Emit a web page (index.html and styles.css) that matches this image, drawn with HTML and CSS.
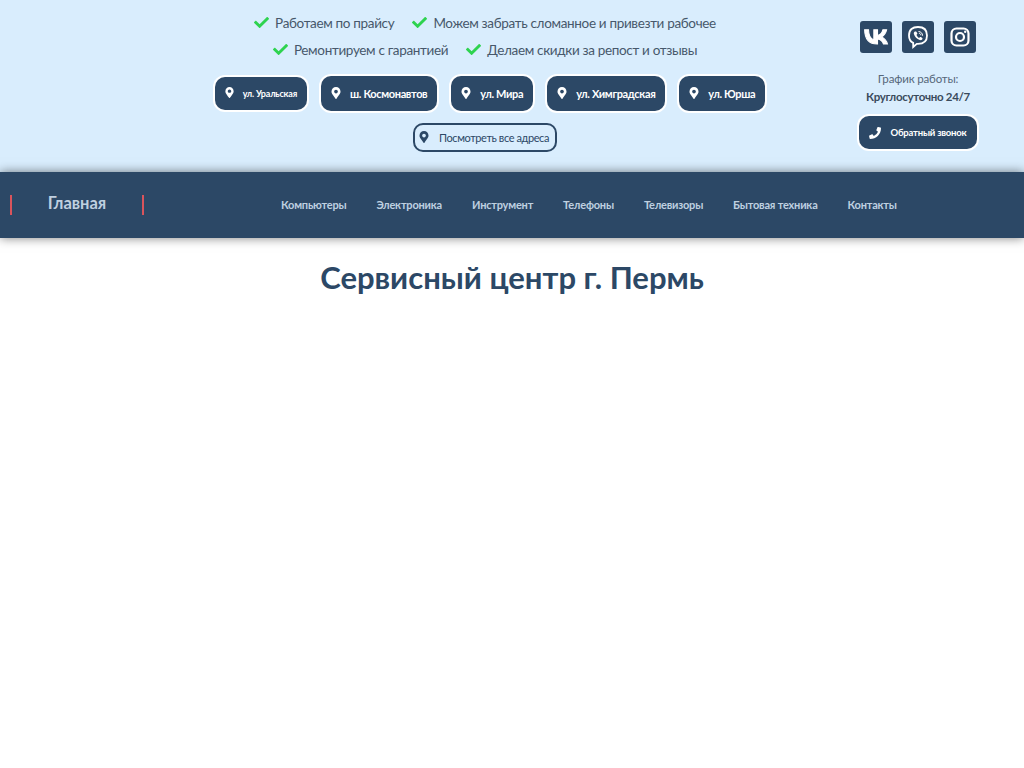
FILE: index.html
```html
<!DOCTYPE html>
<html lang="ru">
<head>
    <meta charset="UTF-8">
    <meta name="viewport" content="width=device-width, initial-scale=1.0">
    <title>Сервисный центр г. Пермь</title>
    <link rel="stylesheet" href="styles.css">
</head>
<body>
    <svg class="icon-defs" width="0" height="0">
        <symbol id="pin" viewBox="0 0 384 512">
            <path d="M172 502C27 291 0 269 0 192 0 86 86 0 192 0s192 86 192 192c0 77-27 99-172 310-10 14-30 14-40 0zm20-230c44 0 80-36 80-80s-36-80-80-80-80 36-80 80 36 80 80 80z"/>
        </symbol>
        <symbol id="check" viewBox="0 0 512 512">
            <path d="M174 439L7 273c-10-10-10-26 0-36l36-36c10-10 26-10 36 0l113 112L433 73c10-10 26-10 36 0l36 36c10 10 10 26 0 36L210 439c-10 10-26 10-36 0z"/>
        </symbol>
    </svg>

    <header class="top">
        <div class="top-main">
            <ul class="perks">
                <li><svg class="check"><use href="#check"/></svg>Работаем по прайсу</li>
                <li><svg class="check"><use href="#check"/></svg>Можем забрать сломанное и привезти рабочее</li>
            </ul>
            <ul class="perks">
                <li><svg class="check"><use href="#check"/></svg>Ремонтируем с гарантией</li>
                <li><svg class="check"><use href="#check"/></svg>Делаем скидки за репост и отзывы</li>
            </ul>
            <div class="addresses">
                <a class="addr addr-small" href="#"><svg class="pin"><use href="#pin"/></svg>ул. Уральская</a>
                <a class="addr" href="#"><svg class="pin"><use href="#pin"/></svg>ш. Космонавтов</a>
                <a class="addr" href="#"><svg class="pin"><use href="#pin"/></svg>ул. Мира</a>
                <a class="addr" href="#"><svg class="pin"><use href="#pin"/></svg>ул. Химградская</a>
                <a class="addr" href="#"><svg class="pin"><use href="#pin"/></svg>ул. Юрша</a>
            </div>
            <a class="all-addr" href="#"><svg class="pin"><use href="#pin"/></svg>Посмотреть все адреса</a>
        </div>
        <div class="top-side">
            <div class="socials">
                <a class="social" href="#">
                    <svg viewBox="0 0 24 24" width="26" height="26"><path fill="#fff" d="M13 18.500C5.800 18.500 1.700 13.600 1.500 5.300h3.600c.1 6.100 2.800 8.700 4.900 9.200V5.300h3.400v5.300c2.100-.2 4.300-2.600 5-5.300h3.400c-.6 3.300-3 5.700-4.700 6.700 1.700.8 4.500 2.900 5.500 6.500h-3.700c-.8-2.500-2.800-4.400-5.500-4.700v4.700z" stroke="#fff" stroke-width="1"/></svg>
                </a>
                <a class="social" href="#">
                    <svg viewBox="0 0 24 24" width="24" height="24" fill="none" stroke="#fff">
                        <path stroke-width="1.800" d="M12 2C6.500 2 3 4.500 3 10.500c0 3.700 1.400 6.100 4.200 7.400V22l3.600-3.200c.4 0 .8.100 1.200.100 6 0 9-3.200 9-8.400C21 4.500 17.500 2 12 2z"/>
                        <path fill="#fff" stroke="none" d="M9.200 6.500c.5-.2 1-.1 1.300.4l.7 1.100c.3.500.2 1-.2 1.300l-.5.400c.3 1.300 1.300 2.600 2.700 3.200l.5-.6c.3-.4.900-.5 1.300-.2l1.100.8c.5.300.5.900.2 1.300-.6.900-1.500 1.300-2.500.9-3-1.200-5-3.300-5.900-6.100-.3-1 .1-2 1-2.500z"/>
                        <path stroke-width="1" d="M12.500 6.500c2.500.2 4 1.800 4.100 4.200M12.900 8.300c1.200.1 1.900.9 2 2"/>
                    </svg>
                </a>
                <a class="social" href="#">
                    <svg viewBox="0 0 24 24" width="24" height="24" fill="none" stroke="#fff" stroke-width="2.200">
                        <rect x="3.500" y="3.500" width="17" height="17" rx="5"/>
                        <circle cx="12" cy="12" r="4"/>
                        <circle cx="17.200" cy="6.800" r="1.200" fill="#fff" stroke="none"/>
                    </svg>
                </a>
            </div>
            <p class="hours-label">График работы:</p>
            <p class="hours">Круглосуточно 24/7</p>
            <a class="callback" href="#">
                <svg viewBox="0 0 512 512" width="12" height="12"><path fill="#fff" d="M493 24L389 0c-11-3-23 3-27 14l-48 112c-4 10-1 21 7 28l61 50c-36 76-98 139-176 176l-50-61c-7-8-18-11-28-7L16 360c-11 5-17 17-14 28l24 104c3 11 12 20 24 20 256 0 462-207 462-462 0-12-8-22-19-26z"/></svg>
                Обратный звонок
            </a>
        </div>
    </header>

    <nav class="nav">
        <a class="nav-home" href="#">Главная</a>
        <ul class="nav-list">
            <li><a href="#">Компьютеры</a></li>
            <li><a href="#">Электроника</a></li>
            <li><a href="#">Инструмент</a></li>
            <li><a href="#">Телефоны</a></li>
            <li><a href="#">Телевизоры</a></li>
            <li><a href="#">Бытовая техника</a></li>
            <li><a href="#">Контакты</a></li>
        </ul>
    </nav>

    <h1 class="title">Сервисный центр г. Пермь</h1>
</body>
</html>
```

FILE: styles.css
```css
body {
    margin: 0;
    background: #fff;
    color: #2c4866;
    font-family: Lato, "Noto Sans", sans-serif;
}
a {
    text-decoration: none;
}
ul {
    list-style: none;
    margin: 0;
    padding: 0;
}
p {
    margin: 0;
}
.icon-defs {
    position: absolute;
}

/* верхний блок */
.top {
    display: flex;
    height: 172px;
    box-sizing: border-box;
    padding: 0 41px 0 117px;
    background: #d9edfd;
}
.top-main {
    flex: 1;
    display: flex;
    flex-direction: column;
    align-items: center;
    padding-top: 10px;
}
.perks {
    display: flex;
    justify-content: center;
    gap: 18px;
    height: 27px;
    line-height: 27px;
    font-size: 13.500px;
    letter-spacing: -0.33px;
    color: #47586b;
}
.perks li {
    display: flex;
    align-items: center;
}
.check {
    width: 15px;
    height: 15px;
    margin: -3px 6px 0 0;
    fill: #2ed34f;
}
.addresses {
    display: flex;
    justify-content: center;
    align-items: center;
    gap: 14px;
    margin: 12px 0 0 10px;
}
.addr {
    display: flex;
    align-items: center;
    height: 35px;
    padding: 0 10px;
    border-radius: 10px;
    background: #2c4866;
    box-shadow: 0 0 0 2px #fff;
    color: #fff;
    font-size: 11px;
    font-weight: 700;
    letter-spacing: -0.35px;
}
.addr-small {
    height: 33px;
    font-size: 9px;
    letter-spacing: -0.2px;
}
.pin {
    width: 10px;
    height: 12px;
    margin-right: 9px;
    margin-top: -2px;
    fill: #fff;
}
.addr-small .pin {
    width: 9px;
    height: 11px;
}
.all-addr {
    display: flex;
    align-items: center;
    height: 25px;
    margin-top: 12px;
    padding: 0 6px 0 4px;
    border: 2px solid #2c4866;
    border-radius: 10px;
    color: #2c4866;
    font-size: 11px;
    letter-spacing: -0.4px;
}
.all-addr .pin {
    fill: #2c4866;
    margin-right: 10px;
}
.top-side {
    width: 130px;
    display: flex;
    flex-direction: column;
    align-items: center;
    padding-top: 21px;
}
.socials {
    display: flex;
    gap: 10px;
}
.social {
    display: flex;
    align-items: center;
    justify-content: center;
    width: 32px;
    height: 32px;
    border-radius: 3px;
    background: #2c4866;
}
.hours-label {
    margin-top: 18px;
    font-size: 11.500px;
    line-height: 16px;
    letter-spacing: -0.15px;
    color: #56677a;
}
.hours {
    margin-top: 1px;
    font-size: 11.500px;
    line-height: 18px;
    font-weight: 700;
    letter-spacing: -0.3px;
    color: #3a4a5c;
}
.callback {
    display: flex;
    align-items: center;
    gap: 9px;
    height: 33px;
    margin-top: 10px;
    padding: 0 10px;
    border-radius: 10px;
    background: #2c4866;
    box-shadow: 0 0 0 2px #fff;
    color: #fff;
    font-size: 9.500px;
    font-weight: 700;
    letter-spacing: -0.2px;
    white-space: nowrap;
}

/* меню */
.nav {
    position: relative;
    display: flex;
    align-items: center;
    height: 66px;
    background: #2c4866;
    box-shadow: 0 0 10px rgba(0, 0, 0, 0.5);
}
.nav-home {
    width: 130px;
    margin-left: 10px;
    padding-bottom: 3px;
    border-left: 2px solid #d9545c;
    border-right: 2px solid #d9545c;
    text-align: center;
    color: #bfd0e0;
    font-size: 16.500px;
    font-weight: 700;
    line-height: 17px;
}
.nav-list {
    display: flex;
    gap: 30px;
    margin-left: 137px;
    padding-bottom: 6px;
}
.nav-list a {
    color: #bfd0e0;
    font-size: 11px;
    font-weight: 700;
    letter-spacing: -0.2px;
}
.title {
    margin: 21px 0 0;
    text-align: center;
    color: #2c4866;
    font-size: 31px;
    line-height: 36px;
    font-weight: 700;
}
```
